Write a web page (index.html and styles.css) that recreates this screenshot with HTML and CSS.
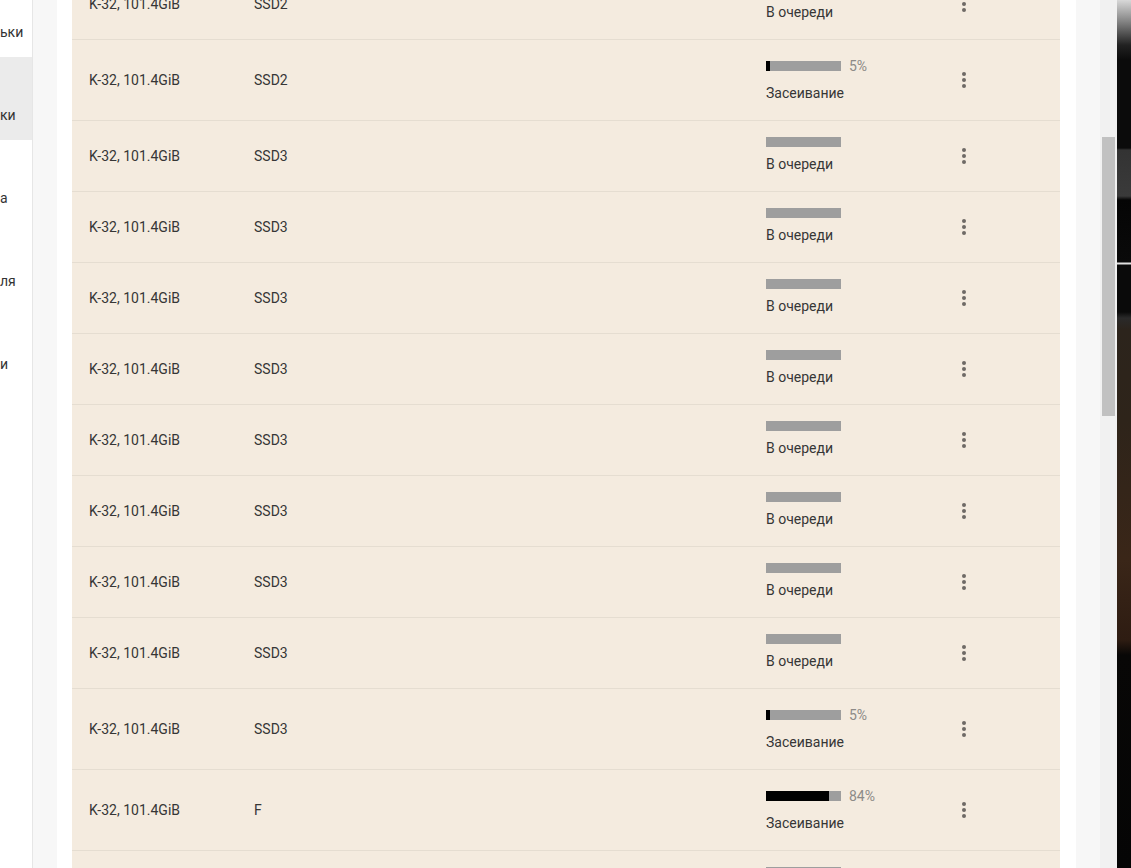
FILE: index.html
```html
<!DOCTYPE html>
<html lang="ru">
<head>
<meta charset="utf-8">
<title>Задачи</title>
<link rel="stylesheet" href="styles.css">
</head>
<body>
<div class="screen">
  <nav class="sidebar">
    <div class="nav-list">
      <div class="nav-item"><span>ьки</span></div>
      <div class="nav-item active"><span>ки</span></div>
      <div class="nav-item"><span>а</span></div>
      <div class="nav-item"><span>ля</span></div>
      <div class="nav-item"><span>и</span></div>
    </div>
  </nav>
  <main class="main">
    <div class="panel">
      <div class="card">
        <div class="rows">
          <div class="row"><div class="c-name">K-32, 101.4GiB</div><div class="c-disk">SSD2</div><div class="c-status"><div class="bar-line"><div class="bar"></div></div><div class="status-text">В очереди</div></div><div class="c-menu"><svg viewBox="0 0 24 24" width="24" height="24"><circle cx="12" cy="6" r="2"/><circle cx="12" cy="12" r="2"/><circle cx="12" cy="18" r="2"/></svg></div></div>
          <div class="row seeding"><div class="c-name">K-32, 101.4GiB</div><div class="c-disk">SSD2</div><div class="c-status"><div class="bar-line"><div class="bar"><div class="fill" style="width:5%"></div></div><span class="pct">5%</span></div><div class="status-text">Засеивание</div></div><div class="c-menu"><svg viewBox="0 0 24 24" width="24" height="24"><circle cx="12" cy="6" r="2"/><circle cx="12" cy="12" r="2"/><circle cx="12" cy="18" r="2"/></svg></div></div>
          <div class="row"><div class="c-name">K-32, 101.4GiB</div><div class="c-disk">SSD3</div><div class="c-status"><div class="bar-line"><div class="bar"></div></div><div class="status-text">В очереди</div></div><div class="c-menu"><svg viewBox="0 0 24 24" width="24" height="24"><circle cx="12" cy="6" r="2"/><circle cx="12" cy="12" r="2"/><circle cx="12" cy="18" r="2"/></svg></div></div>
          <div class="row"><div class="c-name">K-32, 101.4GiB</div><div class="c-disk">SSD3</div><div class="c-status"><div class="bar-line"><div class="bar"></div></div><div class="status-text">В очереди</div></div><div class="c-menu"><svg viewBox="0 0 24 24" width="24" height="24"><circle cx="12" cy="6" r="2"/><circle cx="12" cy="12" r="2"/><circle cx="12" cy="18" r="2"/></svg></div></div>
          <div class="row"><div class="c-name">K-32, 101.4GiB</div><div class="c-disk">SSD3</div><div class="c-status"><div class="bar-line"><div class="bar"></div></div><div class="status-text">В очереди</div></div><div class="c-menu"><svg viewBox="0 0 24 24" width="24" height="24"><circle cx="12" cy="6" r="2"/><circle cx="12" cy="12" r="2"/><circle cx="12" cy="18" r="2"/></svg></div></div>
          <div class="row"><div class="c-name">K-32, 101.4GiB</div><div class="c-disk">SSD3</div><div class="c-status"><div class="bar-line"><div class="bar"></div></div><div class="status-text">В очереди</div></div><div class="c-menu"><svg viewBox="0 0 24 24" width="24" height="24"><circle cx="12" cy="6" r="2"/><circle cx="12" cy="12" r="2"/><circle cx="12" cy="18" r="2"/></svg></div></div>
          <div class="row"><div class="c-name">K-32, 101.4GiB</div><div class="c-disk">SSD3</div><div class="c-status"><div class="bar-line"><div class="bar"></div></div><div class="status-text">В очереди</div></div><div class="c-menu"><svg viewBox="0 0 24 24" width="24" height="24"><circle cx="12" cy="6" r="2"/><circle cx="12" cy="12" r="2"/><circle cx="12" cy="18" r="2"/></svg></div></div>
          <div class="row"><div class="c-name">K-32, 101.4GiB</div><div class="c-disk">SSD3</div><div class="c-status"><div class="bar-line"><div class="bar"></div></div><div class="status-text">В очереди</div></div><div class="c-menu"><svg viewBox="0 0 24 24" width="24" height="24"><circle cx="12" cy="6" r="2"/><circle cx="12" cy="12" r="2"/><circle cx="12" cy="18" r="2"/></svg></div></div>
          <div class="row"><div class="c-name">K-32, 101.4GiB</div><div class="c-disk">SSD3</div><div class="c-status"><div class="bar-line"><div class="bar"></div></div><div class="status-text">В очереди</div></div><div class="c-menu"><svg viewBox="0 0 24 24" width="24" height="24"><circle cx="12" cy="6" r="2"/><circle cx="12" cy="12" r="2"/><circle cx="12" cy="18" r="2"/></svg></div></div>
          <div class="row"><div class="c-name">K-32, 101.4GiB</div><div class="c-disk">SSD3</div><div class="c-status"><div class="bar-line"><div class="bar"></div></div><div class="status-text">В очереди</div></div><div class="c-menu"><svg viewBox="0 0 24 24" width="24" height="24"><circle cx="12" cy="6" r="2"/><circle cx="12" cy="12" r="2"/><circle cx="12" cy="18" r="2"/></svg></div></div>
          <div class="row seeding"><div class="c-name">K-32, 101.4GiB</div><div class="c-disk">SSD3</div><div class="c-status"><div class="bar-line"><div class="bar"><div class="fill" style="width:5%"></div></div><span class="pct">5%</span></div><div class="status-text">Засеивание</div></div><div class="c-menu"><svg viewBox="0 0 24 24" width="24" height="24"><circle cx="12" cy="6" r="2"/><circle cx="12" cy="12" r="2"/><circle cx="12" cy="18" r="2"/></svg></div></div>
          <div class="row seeding"><div class="c-name">K-32, 101.4GiB</div><div class="c-disk">F</div><div class="c-status"><div class="bar-line"><div class="bar"><div class="fill" style="width:84%"></div></div><span class="pct">84%</span></div><div class="status-text">Засеивание</div></div><div class="c-menu"><svg viewBox="0 0 24 24" width="24" height="24"><circle cx="12" cy="6" r="2"/><circle cx="12" cy="12" r="2"/><circle cx="12" cy="18" r="2"/></svg></div></div>
          <div class="row"><div class="c-name">K-32, 101.4GiB</div><div class="c-disk">SSD3</div><div class="c-status"><div class="bar-line"><div class="bar"></div></div><div class="status-text">В очереди</div></div><div class="c-menu"><svg viewBox="0 0 24 24" width="24" height="24"><circle cx="12" cy="6" r="2"/><circle cx="12" cy="12" r="2"/><circle cx="12" cy="18" r="2"/></svg></div></div>
        </div>
      </div>
    </div>
  </main>
  <div class="scrollbar"><div class="thumb"></div></div>
  <div class="desktop"></div>
</div>
</body>
</html>
```
FILE: styles.css
```css
html, body {
  margin: 0;
  padding: 0;
  height: 100%;
  overflow: hidden;
}
body {
  font-family: Roboto, "Liberation Sans", sans-serif;
  color: #333;
  background: #f7f7f7;
}
.screen {
  display: flex;
  height: 868px;
  width: 1131px;
  overflow: hidden;
}
.sidebar {
  width: 32px;
  flex: none;
  background: #fff;
  border-right: 1px solid #e6e6e6;
  box-shadow: 1px 0 2px rgba(0,0,0,0.04);
  overflow: hidden;
}
.nav-list {
  margin-top: -26px;
  display: flex;
  flex-direction: column;
}
.nav-item {
  height: 83px;
  box-sizing: border-box;
  display: flex;
  align-items: flex-end;
  padding-bottom: 15px;
  font-size: 14px;
  line-height: 20px;
  color: #333;
  white-space: nowrap;
}
.nav-item.active {
  background: #ebebeb;
}
.main {
  flex: 1;
  background: #f7f7f7;
  padding-left: 24px;
  padding-right: 24px;
  overflow: hidden;
}
.panel {
  background: #fff;
  padding: 0 16px 0 15px;
  height: 100%;
}
.card {
  background: #f4ebdf;
  height: 100%;
  overflow: hidden;
}
.rows {
  margin-top: -31px;
}
.row {
  display: grid;
  grid-template-columns: 165px 512px 186px 24px;
  align-items: center;
  padding: 16px 0 17px 17px;
  border-bottom: 1px solid #e5ddd1;
  font-size: 14px;
  line-height: 20px;
  color: #363636;
}
.c-name, .c-disk {
  white-space: nowrap;
}
.c-status {
  display: flex;
  flex-direction: column;
  gap: 7px;
}
.bar-line {
  display: flex;
  align-items: center;
}
.seeding .bar-line {
  height: 20px;
}
.bar {
  width: 75px;
  height: 10px;
  background: #9e9e9e;
  display: flex;
}
.fill {
  height: 100%;
  background: #000;
}
.pct {
  margin-left: 8px;
  font-size: 14px;
  color: #8c8a87;
}
.status-text {
  white-space: nowrap;
}
.c-menu {
  display: flex;
  align-items: center;
  justify-content: center;
}
.c-menu svg {
  display: block;
  fill: #6e6a66;
}
.scrollbar {
  width: 17px;
  flex: none;
  background: #f1f1f1;
  padding-top: 137px;
  box-sizing: border-box;
}
.thumb {
  margin: 0 2px;
  height: 279px;
  background: #c1c1c1;
}
.desktop {
  width: 14px;
  flex: none;
  background:
    linear-gradient(to bottom,
      #d8d8d8 0px, #8a8a8a 20px, #222 45px, #0b0b0b 60px,
      #0b0b0b 148px, #333 150px, #3a3a3a 196px, #050505 200px,
      #0a0a0a 262px, #e0e0e0 263px, #e0e0e0 264px, #0a0a0a 265px,
      #0a0a0a 312px, #2a2a2a 318px, #2c241c 330px, #2e241a 420px,
      #3a2618 560px, #2e1c12 640px, #080706 655px, #050505 868px);
}
```
